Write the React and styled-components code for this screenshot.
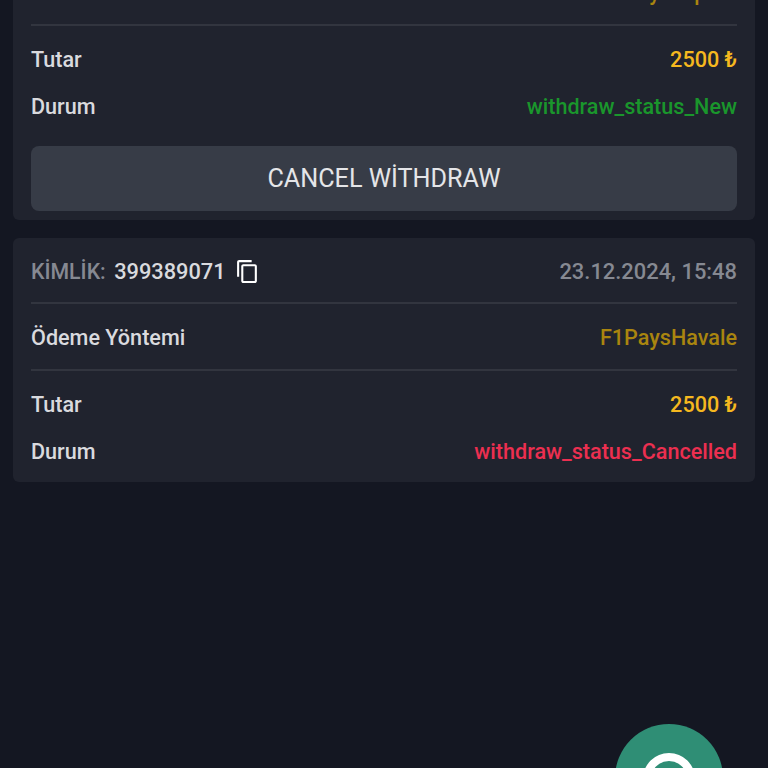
import React from 'react'
import styled, { createGlobalStyle } from 'styled-components'

const GlobalStyle = createGlobalStyle`
    html, body {
        margin: 0;
        height: 100%;
        background: #141722;
        overflow: hidden;
    }
`

const Page = styled.div`
    position: relative;
    height: 768px;
    overflow: hidden;
    font-family: Roboto, "Noto Sans", sans-serif;
`

/* the page is scrolled, so the first card starts above the window */
const List = styled.div`
    display: flex;
    flex-direction: column;
    gap: 18px;
    padding: 0 13px;
    margin-top: -107px;
`

const Card = styled.div`
    background: #20232e;
    border-radius: 6px;
    padding: 0 18px;
`

const Row = styled.div`
    display: flex;
    justify-content: space-between;
    align-items: center;
    box-sizing: border-box;
    height: ${p => p.$h || 47}px;
    padding-top: 2px;
    font-size: 21.6px;
    font-weight: 500;
    color: #d9dade;
`

const Amounts = styled.div`
    padding: 9px 0 8px;
`

const Divider = styled.div`
    height: 2px;
    background: #32353f;
`

const IdGroup = styled.div`
    display: flex;
    align-items: center;
    gap: 9px;
    font-size: 21.8px;
`

const IdLabel = styled.span`
    margin-right: 3px;
    color: #868992;
    font-size: 21.3px;
`

const CopyIcon = styled.svg`
    width: 25px;
    height: 25px;
    color: #ffffff;
`

const DateText = styled.span`
    color: #868992;
    font-size: 21.9px;
`

const Value = styled.span`
    color: ${p => p.$color};
`

const CancelButton = styled.button`
    display: block;
    width: 100%;
    height: 65px;
    margin: 9px 0 9px;
    border: none;
    border-radius: 8px;
    background: #373c47;
    color: #e4e5e8;
    font-family: Roboto, sans-serif;
    font-size: 25.2px;
    font-weight: 400;
`

const ChatButton = styled.div`
    position: absolute;
    left: 615px;
    top: 724px;
    width: 108px;
    height: 108px;
    border-radius: 50%;
    background: #2f8e75;
    display: flex;
    justify-content: center;
    padding-top: 28px;
    box-sizing: border-box;
`

const RingIcon = styled.svg`
    width: 54px;
    height: 54px;
`

const Payment = ({ id, date, method, status, statusColor, children }) => (
    <Card>
        <Row $h={64}>
            <IdGroup>
                <span><IdLabel>KİMLİK:</IdLabel> {id}</span>
                <CopyIcon viewBox="0 0 24 24" fill="currentColor">
                    <path d="M16 1H4c-1.1 0-2 .9-2 2v14h2V3h12V1zm3 4H8c-1.1 0-2 .9-2 2v14c0 1.1.9 2 2 2h11c1.1 0 2-.9 2-2V7c0-1.1-.9-2-2-2zm0 16H8V7h11v14z" />
                </CopyIcon>
            </IdGroup>
            <DateText>{date}</DateText>
        </Row>
        <Divider />
        <Row $h={65}>
            <span>Ödeme Yöntemi</span>
            <Value $color="#a9850f">{method}</Value>
        </Row>
        <Divider />
        <Amounts>
            <Row>
                <span>Tutar</span>
                <Value $color="#f5b81f">2500 ₺</Value>
            </Row>
            <Row>
                <span>Durum</span>
                <Value $color={statusColor}>{status}</Value>
            </Row>
        </Amounts>
        {children}
    </Card>
)

const App = () => (
    <Page>
        <GlobalStyle />
        <List>
            <Payment
                id="399389072"
                date="23.12.2024, 15:50"
                method="F1PayerHpara"
                status="withdraw_status_New"
                statusColor="#1a962c"
            >
                <CancelButton>CANCEL WİTHDRAW</CancelButton>
            </Payment>
            <Payment
                id="399389071"
                date="23.12.2024, 15:48"
                method="F1PaysHavale"
                status="withdraw_status_Cancelled"
                statusColor="#ec2f50"
            />
        </List>
        <ChatButton>
            <RingIcon viewBox="0 0 54 54">
                <circle cx="27" cy="27" r="22" fill="none" stroke="#ffffff" strokeWidth="8" />
            </RingIcon>
        </ChatButton>
    </Page>
)

export default App
